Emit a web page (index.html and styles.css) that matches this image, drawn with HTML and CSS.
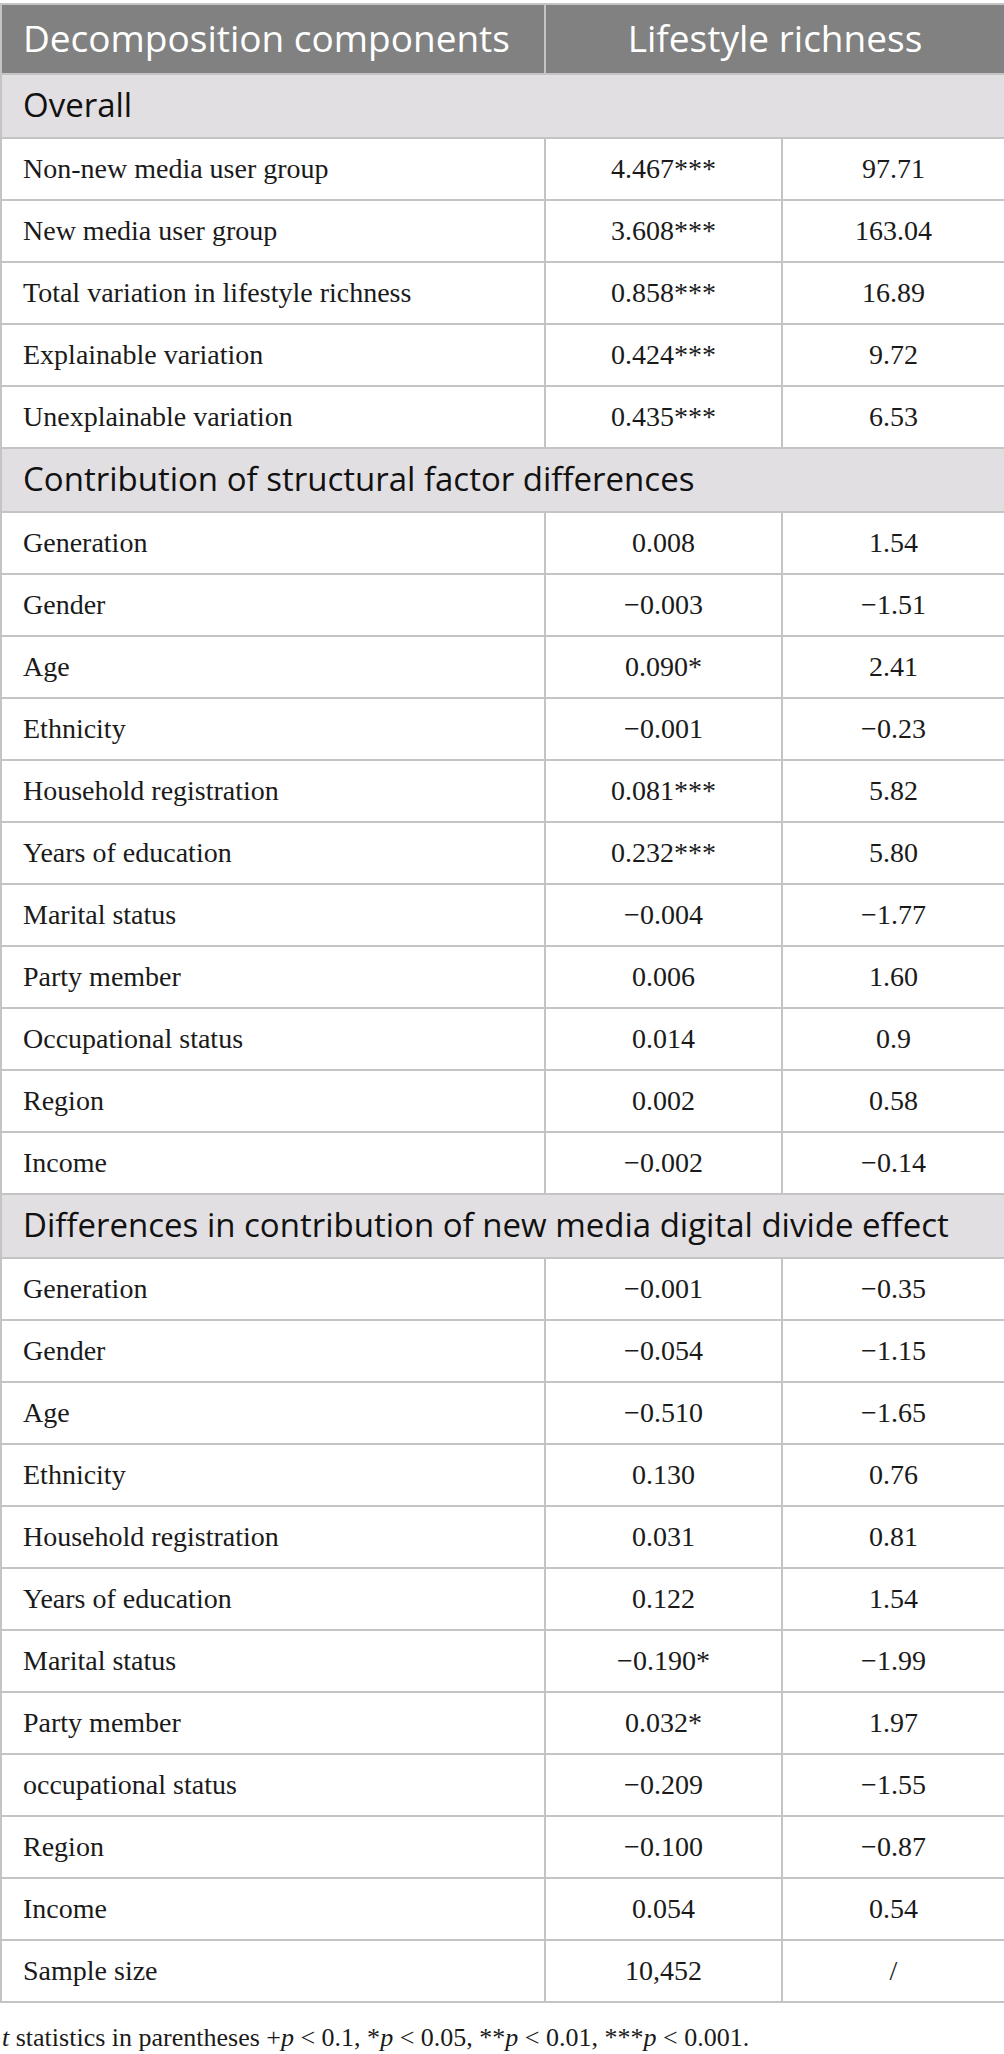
FILE: index.html
```html
<!DOCTYPE html>
<html>
<head>
    <link rel="stylesheet" href="styles.css">
    <title>Decomposition of lifestyle richness</title>
</head>
<body>
    <div class="wrap">
        <table class="decomp">
            <colgroup>
                <col class="col-name">
                <col class="col-coef">
                <col class="col-stat">
            </colgroup>
            <thead>
                <tr>
                    <th class="head-left">Decomposition components</th>
                    <th colspan="2">Lifestyle richness</th>
                </tr>
            </thead>
            <tbody>
                <tr class="section"><td colspan="3">Overall</td></tr>
                <tr><td>Non-new media user group</td><td>4.467***</td><td>97.71</td></tr>
                <tr><td>New media user group</td><td>3.608***</td><td>163.04</td></tr>
                <tr><td>Total variation in lifestyle richness</td><td>0.858***</td><td>16.89</td></tr>
                <tr><td>Explainable variation</td><td>0.424***</td><td>9.72</td></tr>
                <tr><td>Unexplainable variation</td><td>0.435***</td><td>6.53</td></tr>

                <tr class="section"><td colspan="3">Contribution of structural factor differences</td></tr>
                <tr><td>Generation</td><td>0.008</td><td>1.54</td></tr>
                <tr><td>Gender</td><td>&minus;0.003</td><td>&minus;1.51</td></tr>
                <tr><td>Age</td><td>0.090*</td><td>2.41</td></tr>
                <tr><td>Ethnicity</td><td>&minus;0.001</td><td>&minus;0.23</td></tr>
                <tr><td>Household registration</td><td>0.081***</td><td>5.82</td></tr>
                <tr><td>Years of education</td><td>0.232***</td><td>5.80</td></tr>
                <tr><td>Marital status</td><td>&minus;0.004</td><td>&minus;1.77</td></tr>
                <tr><td>Party member</td><td>0.006</td><td>1.60</td></tr>
                <tr><td>Occupational status</td><td>0.014</td><td>0.9</td></tr>
                <tr><td>Region</td><td>0.002</td><td>0.58</td></tr>
                <tr><td>Income</td><td>&minus;0.002</td><td>&minus;0.14</td></tr>

                <tr class="section"><td colspan="3">Differences in contribution of new media digital divide effect</td></tr>
                <tr><td>Generation</td><td>&minus;0.001</td><td>&minus;0.35</td></tr>
                <tr><td>Gender</td><td>&minus;0.054</td><td>&minus;1.15</td></tr>
                <tr><td>Age</td><td>&minus;0.510</td><td>&minus;1.65</td></tr>
                <tr><td>Ethnicity</td><td>0.130</td><td>0.76</td></tr>
                <tr><td>Household registration</td><td>0.031</td><td>0.81</td></tr>
                <tr><td>Years of education</td><td>0.122</td><td>1.54</td></tr>
                <tr><td>Marital status</td><td>&minus;0.190*</td><td>&minus;1.99</td></tr>
                <tr><td>Party member</td><td>0.032*</td><td>1.97</td></tr>
                <tr><td>occupational status</td><td>&minus;0.209</td><td>&minus;1.55</td></tr>
                <tr><td>Region</td><td>&minus;0.100</td><td>&minus;0.87</td></tr>
                <tr><td>Income</td><td>0.054</td><td>0.54</td></tr>
                <tr><td>Sample size</td><td>10,452</td><td>/</td></tr>
            </tbody>
        </table>
        <p class="note"><i>t</i> statistics in parentheses +<i>p</i> &lt; 0.1, *<i>p</i> &lt; 0.05, **<i>p</i> &lt; 0.01, ***<i>p</i> &lt; 0.001.</p>
    </div>
</body>
</html>
```

FILE: styles.css
```css
body {
    margin: 0;
    background-color: white;
    color: #1a1a1a;
}
.wrap {
    padding-top: 3px;
}
.decomp {
    width: 1004px;
    border-collapse: collapse;
    table-layout: fixed;
    font-family: "Liberation Serif", "Times New Roman", serif;
    font-size: 28px;
}
.col-name {
    width: 544px;
}
.col-coef {
    width: 237px;
}
.col-stat {
    width: 223px;
}
.decomp th,
.decomp td {
    border: 2px solid #c4c4c4;
    height: 60px;
    padding: 0 0 0 21px;
    text-align: center;
    white-space: nowrap;
}
.decomp td:first-child {
    text-align: left;
}
.decomp td + td {
    padding: 0;
}
.decomp thead th {
    height: 64px;
    background-color: #808180;
    color: white;
    font-family: "Open Sans", "Liberation Sans", sans-serif;
    font-size: 37px;
    font-weight: normal;
    padding: 0 0 4px 0;
}
.decomp thead .head-left {
    text-align: left;
    padding-left: 21px;
}
.decomp .section td {
    height: 58px;
    background-color: #e1dfe1;
    font-family: "Open Sans", "Liberation Sans", sans-serif;
    font-size: 33px;
    color: #111;
    padding-bottom: 4px;
}
.note {
    margin: 20px 0 0 2px;
    font-family: "Liberation Serif", "Times New Roman", serif;
    font-size: 26px;
    color: #1a1a1a;
}
```
